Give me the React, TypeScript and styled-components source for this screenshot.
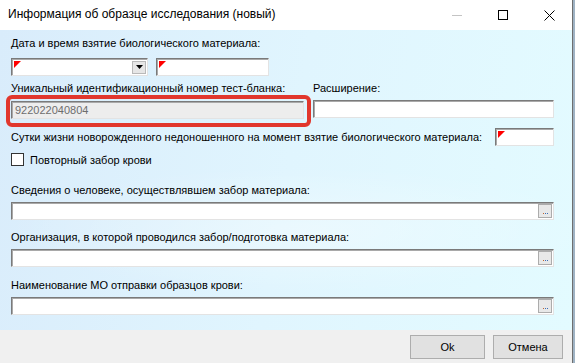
import styled, { createGlobalStyle } from "styled-components";

const GlobalStyle = createGlobalStyle`
  body {
    margin: 0;
    background: #9fb3c4;
    font-family: "Liberation Sans", Arial, sans-serif;
  }
`;

const StyledWindow = styled.div`
  width: 572px;
  height: 363px;
  border-right: 1px solid #6f6f6f;
  display: flex;
  flex-direction: column;
  overflow: hidden;
`;

const StyledTitleBar = styled.div`
  height: 30px;
  background: #ffffff;
  display: flex;
  align-items: center;
  padding-left: 8px;
  font-size: 12px;
  color: #000;
`;

const StyledTitle = styled.span`
  flex: 1;
  margin-top: -2px;
`;

const StyledCtrl = styled.div<{ $disabled?: boolean }>`
  width: 46px;
  height: 30px;
  display: flex;
  align-items: center;
  justify-content: center;
  color: ${(p) => (p.$disabled ? "#c4c4c4" : "#000")};
`;

const StyledBody = styled.div`
  flex: 1;
  background:
    radial-gradient(ellipse 420px 90px at 300px 200px, rgba(255, 255, 255, 0.35), transparent 70%),
    linear-gradient(100deg, #d9ecfb 0%, #e0f5fe 50%, #e3fbff 100%);
  padding: 7px 18px 0 11px;
  font-size: 11px;
  color: #000;
`;

const StyledLabel = styled.div<{ $mt?: number }>`
  height: 13px;
  line-height: 13px;
  margin-top: ${(p) => p.$mt ?? 0}px;
  white-space: nowrap;
`;

const StyledRow = styled.div<{ $mt?: number }>`
  display: flex;
  align-items: center;
  gap: 8px;
  margin-top: ${(p) => p.$mt ?? 0}px;
`;

const StyledField = styled.div<{ $w?: number; $required?: boolean; $readonly?: boolean }>`
  position: relative;
  box-sizing: border-box;
  width: ${(p) => (p.$w ? `${p.$w}px` : "100%")};
  height: 18px;
  background: ${(p) => (p.$readonly ? "#ededed" : "#ffffff")};
  border: 1px solid;
  border-color: #7a7a7a #e3e3e3 #e3e3e3 #7a7a7a;
  box-shadow: inset 1px 1px 0 #a9a9a9;
  display: flex;
  align-items: center;
  padding-left: 3px;
  color: #6d6d6d;
  font-size: 11px;
  flex-shrink: 0;

  &::before {
    content: "";
    display: ${(p) => (p.$required ? "block" : "none")};
    position: absolute;
    left: 2px;
    top: 2px;
    border-top: 7px solid #ff0000;
    border-right: 7px solid transparent;
  }
`;

const StyledPushRight = styled.div`
  margin-left: auto;
`;

const StyledDropBtn = styled.div`
  margin-left: auto;
  margin-right: 1px;
  width: 14px;
  height: 13px;
  background: #e6e6e6;
  border: 1px solid #b9b9b9;
  box-sizing: border-box;
  display: flex;
  align-items: center;
  justify-content: center;
`;

const StyledEllipsis = styled.div`
  margin-left: auto;
  margin-right: 1px;
  width: 14px;
  height: 14px;
  box-sizing: border-box;
  background: #e8e8e8;
  border: 1px solid #acacac;
  display: flex;
  align-items: flex-end;
  justify-content: center;
  gap: 1px;
  padding-bottom: 3px;
`;

const StyledDot = styled.span<{ $c: string }>`
  width: 1px;
  height: 1px;
  background: ${(p) => p.$c};
`;

const StyledColumns = styled.div`
  display: flex;
  gap: 9px;
  margin-top: 6px;
`;

const StyledCol = styled.div<{ $w: number }>`
  width: ${(p) => p.$w}px;
  display: flex;
  flex-direction: column;
`;

const StyledHighlight = styled.div`
  position: relative;
  margin-top: 6px;

  &::after {
    content: "";
    position: absolute;
    left: -5px;
    top: -6px;
    right: -7px;
    bottom: -8px;
    border: 4px solid #e1372d;
    border-radius: 6px;
    pointer-events: none;
  }
`;

const StyledCheckRow = styled.label`
  display: flex;
  align-items: center;
  gap: 6px;
  margin-top: 7px;
  height: 13px;
`;

const StyledCheckBox = styled.span`
  width: 13px;
  height: 13px;
  box-sizing: border-box;
  background: #fff;
  border: 1px solid #333;
`;

const StyledFooter = styled.div`
  height: 32px;
  background: #f0f0f0;
  display: flex;
  justify-content: flex-end;
  align-items: center;
  gap: 8px;
  padding-right: 9px;
  padding-top: 1px;
`;

const StyledButton = styled.button<{ $w: number }>`
  width: ${(p) => p.$w}px;
  height: 24px;
  background: #e1e1e1;
  border: 1px solid #adadad;
  font-family: "Liberation Sans", Arial, sans-serif;
  font-size: 11px;
  color: #000;
  padding: 0;
`;

function Field(props: { w?: number; required?: boolean; dots?: boolean }) {
  return (
    <StyledField $w={props.w} $required={props.required}>
      {props.dots && (
        <StyledEllipsis>
          <StyledDot $c="#c0622a" />
          <StyledDot $c="#3a6fb8" />
          <StyledDot $c="#3a6fb8" />
        </StyledEllipsis>
      )}
    </StyledField>
  );
}

export default function App() {
  return (
    <>
      <GlobalStyle />
      <StyledWindow>
        <StyledTitleBar>
          <StyledTitle>Информация об образце исследования (новый)</StyledTitle>
          <StyledCtrl $disabled>
            <svg width="10" height="10" viewBox="0 0 10 10">
              <path d="M0 5.5h10" stroke="currentColor" strokeWidth="1" />
            </svg>
          </StyledCtrl>
          <StyledCtrl>
            <svg width="10" height="10" viewBox="0 0 10 10">
              <rect x="0.5" y="0.5" width="9" height="9" fill="none" stroke="currentColor" />
            </svg>
          </StyledCtrl>
          <StyledCtrl>
            <svg width="11" height="11" viewBox="0 0 11 11">
              <path d="M0.5 0.5l10 10M10.5 0.5l-10 10" stroke="currentColor" strokeWidth="1" />
            </svg>
          </StyledCtrl>
        </StyledTitleBar>

        <StyledBody>
          <StyledLabel>Дата и время взятие биологического материала:</StyledLabel>
          <StyledRow $mt={8}>
            <StyledField $w={137} $required>
              <StyledDropBtn>
                <svg width="7" height="4" viewBox="0 0 7 4">
                  <path d="M0 0h7L3.5 4z" fill="#000" />
                </svg>
              </StyledDropBtn>
            </StyledField>
            <Field w={113} required />
          </StyledRow>

          <StyledColumns>
            <StyledCol $w={293}>
              <StyledLabel>Уникальный идентификационный номер тест-бланка:</StyledLabel>
              <StyledHighlight>
                <StyledField $readonly>922022040804</StyledField>
              </StyledHighlight>
            </StyledCol>
            <StyledCol $w={241}>
              <StyledLabel>Расширение:</StyledLabel>
              <StyledRow $mt={5}>
                <Field />
              </StyledRow>
            </StyledCol>
          </StyledColumns>

          <StyledRow $mt={9}>
            <StyledLabel>Сутки жизни новорожденного недоношенного на момент взятие биологического материала:</StyledLabel>
            <StyledPushRight>
              <Field w={59} required />
            </StyledPushRight>
          </StyledRow>

          <StyledCheckRow>
            <StyledCheckBox />
            Повторный забор крови
          </StyledCheckRow>

          <StyledLabel $mt={18}>Сведения о человеке, осуществлявшем забор материала:</StyledLabel>
          <StyledRow $mt={5}>
            <Field dots />
          </StyledRow>

          <StyledLabel $mt={11}>Организация, в которой проводился забор/подготовка материала:</StyledLabel>
          <StyledRow $mt={5}>
            <Field dots />
          </StyledRow>

          <StyledLabel $mt={12}>Наименование МО отправки образцов крови:</StyledLabel>
          <StyledRow $mt={5}>
            <Field dots />
          </StyledRow>
        </StyledBody>

        <StyledFooter>
          <StyledButton $w={75}>Ok</StyledButton>
          <StyledButton $w={70}>Отмена</StyledButton>
        </StyledFooter>
      </StyledWindow>
    </>
  );
}
